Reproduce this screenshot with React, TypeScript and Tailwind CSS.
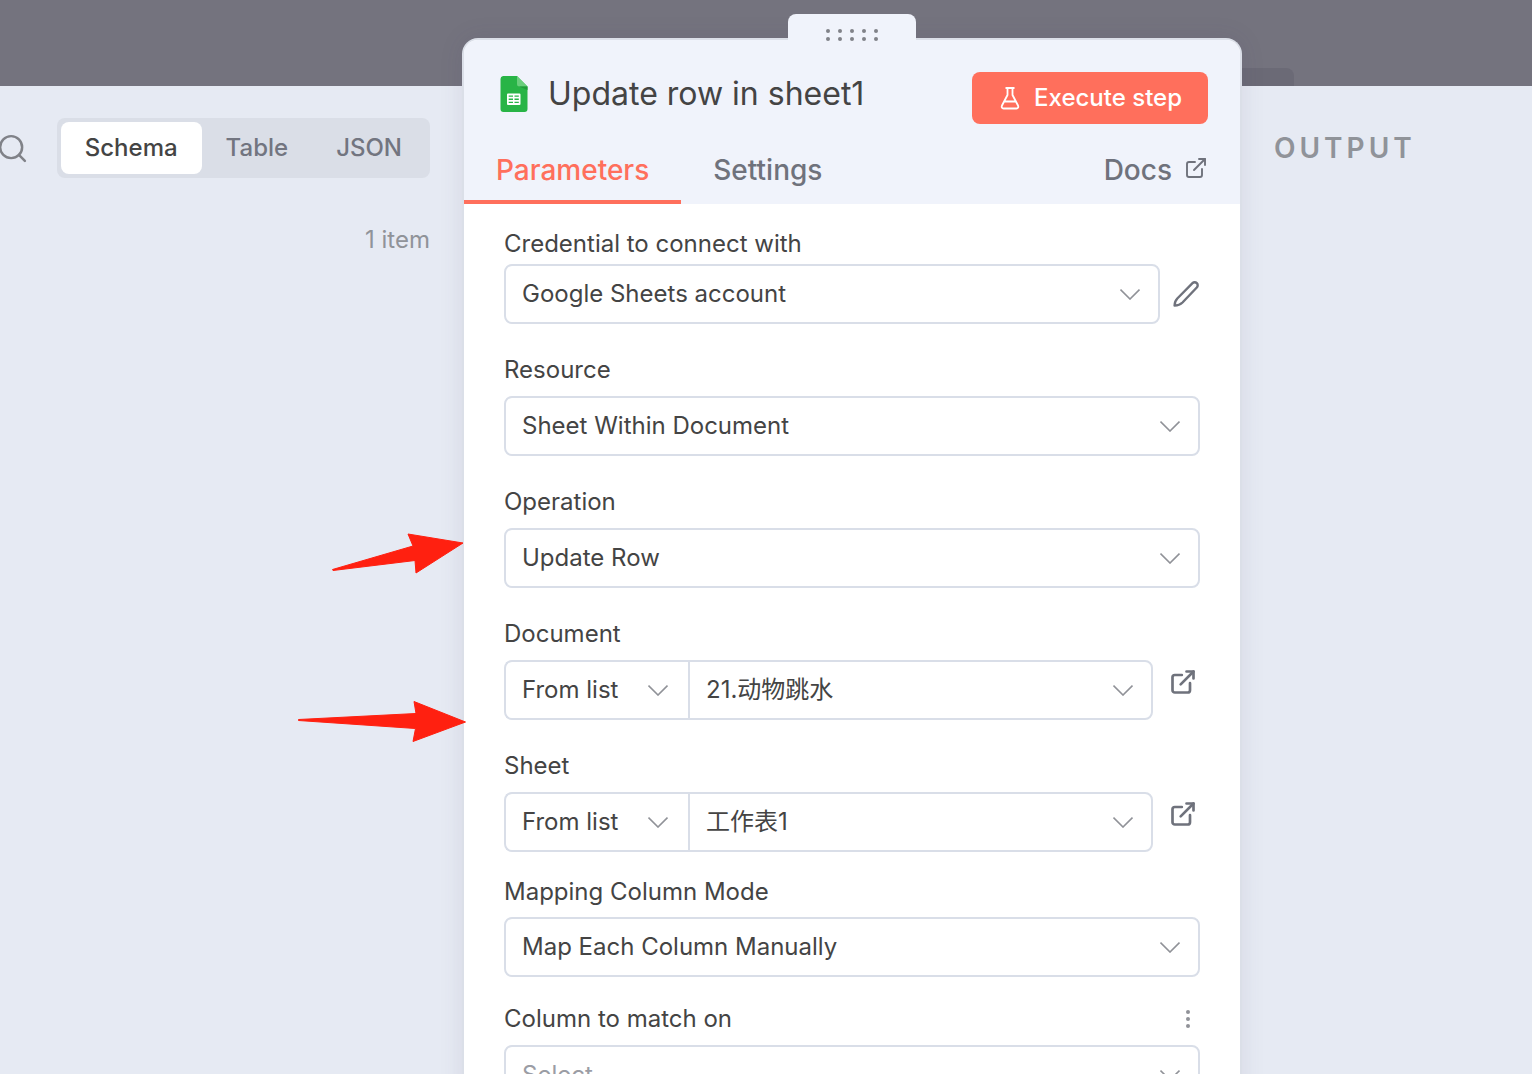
import React from "react";
import { ExternalLink, Search } from "lucide-react";

type SelectFieldProps = {
  id: string;
  value: string;
  ariaLabel?: string;
  placeholder?: boolean;
  className?: string;
};

const selectBase =
  "h-[60px] w-full appearance-none border-2 border-[#d9dee8] bg-white pl-4 pr-14 text-2xl outline-none focus:border-[#ff6f5c]";

const SelectField: React.FC<SelectFieldProps> = ({ id, value, ariaLabel, placeholder, className = "rounded-lg" }) => (
  <div className="relative w-full">
    <select
      id={id}
      aria-label={ariaLabel}
      defaultValue={value}
      className={`${selectBase} ${placeholder ? "text-[#9b9da5]" : "text-[#444]"} ${className}`}
    >
      <option value={value}>{value}</option>
    </select>
    <svg
      className="pointer-events-none absolute right-5 top-6 h-3 w-5 text-[#909298]"
      viewBox="0 0 20 12"
      fill="none"
      stroke="currentColor"
      strokeWidth="1.6"
    >
      <path d="M.5 1.500l9.500 9.500 9.500-9.500" />
    </svg>
  </div>
);

type FieldProps = {
  id: string;
  label: string;
  className?: string;
  labelClassName?: string;
  action?: React.ReactNode;
  children: React.ReactNode;
};

const Field: React.FC<FieldProps> = ({ id, label, className = "mt-[30px]", labelClassName = "mb-2.5", action, children }) => (
  <div className={className}>
    <div className={`flex items-center justify-between ${labelClassName}`}>
      <label htmlFor={id} className="text-2xl leading-8">
        {label}
      </label>
      {action}
    </div>
    {children}
  </div>
);

const LocatorField: React.FC<{ id: string; label: string; value: string }> = ({ id, label, value }) => (
  <Field id={id} label={label}>
    <div className="flex">
      <div className="w-[184px] shrink-0">
        <SelectField id={`${id}-mode`} ariaLabel={`${label} mode`} value="From list" className="rounded-l-lg border-r-0" />
      </div>
      <div className="grow">
        <SelectField id={id} value={value} className="rounded-r-lg" />
      </div>
      <a href="#" aria-label={`Open ${label}`} className="ml-4 mr-[3px] mt-2 h-7 w-7 shrink-0 text-[#6f727c]">
        <ExternalLink size={28} strokeWidth={2.3} />
      </a>
    </div>
  </Field>
);

const SheetsIcon = () => (
  <svg className="h-9 w-7 shrink-0" viewBox="0 0 28 36">
    <path d="M3 0h14l10.500 10.500V33a3 3 0 0 1-3 3H3.500a3 3 0 0 1-3-3V3a3 3 0 0 1 2.500-3z" fill="#28b446" />
    <path d="M17 0l10.500 10.500H19.500A2.500 2.500 0 0 1 17 8z" fill="#6ace7c" />
    <path d="M19 10.500h8.500V14z" fill="#219b38" />
    <path
      fillRule="evenodd"
      fill="#fff"
      d="M8 17.500h11.500a1 1 0 0 1 1 1V28a1 1 0 0 1-1 1H8a1 1 0 0 1-1-1v-9.500a1 1 0 0 1 1-1zM8.700 19.500v1.300h4.300v-1.300zM14.500 19.500v1.300h4.300v-1.300zM8.700 22.600v1.300h4.300v-1.300zM14.500 22.600v1.300h4.300v-1.300zM8.700 25.700v1.300h4.300v-1.300zM14.500 25.700v1.300h4.300v-1.300z"
    />
  </svg>
);

const FlaskIcon = () => (
  <svg className="h-6 w-5" viewBox="0 0 20 24" fill="none" stroke="currentColor" strokeWidth="1.8" strokeLinejoin="round">
    <path d="M5.500 2h9M7.500 2v7L2 19.500C1.300 21.300 2 22.500 3.500 22.500h13c1.500 0 2.200-1.200 1.500-3L12.500 9V2M4.500 15.500h11" />
  </svg>
);

const PencilIcon = () => (
  <svg className="h-7 w-7" viewBox="0 0 28 28" fill="none" stroke="currentColor" strokeWidth="2.4" strokeLinejoin="round">
    <path d="M20.500 3.200a2.900 2.900 0 0 1 4.300 4.300L10.500 22.500Q7.500 25.400 2.600 25.600Q2.600 21.400 5.300 18.500z" />
  </svg>
);

const views = ["Schema", "Table", "JSON"];

const InputPanel = () => (
  <aside className="mt-[86px] bg-[#e6eaf3] pr-8 pt-8">
    <div className="flex items-center justify-between">
      <button type="button" aria-label="Search" className="-ml-1 text-[#808288]">
        <Search size={33} strokeWidth={1.8} />
      </button>
      <div className="flex rounded-lg bg-[#dadee7] p-1" role="tablist">
        {views.map((view, i) => (
          <button
            key={view}
            type="button"
            role="tab"
            aria-selected={i === 0}
            className={`h-[52px] rounded-lg px-6 text-2xl font-medium ${i === 0 ? "bg-white text-[#444]" : "text-[#727580]"}`}
          >
            {view}
          </button>
        ))}
      </div>
    </div>
    <p className="mt-[46px] text-right text-2xl leading-8 text-[#909399]">1 item</p>
  </aside>
);

const OutputPanel = () => (
  <aside className="flex flex-col">
    <div className="flex h-[86px] items-end">
      <div className="h-[18px] w-[52px] rounded-tr-lg bg-[#6b6a76]" />
    </div>
    <div className="grow bg-[#e6eaf3] pl-8 pt-11">
      <h2 className="text-[28px] font-semibold leading-9 tracking-[4px] text-[#909399]">OUTPUT</h2>
    </div>
  </aside>
);

const Annotations = () => (
  <svg className="pointer-events-none absolute -left-[172px] top-[520px] h-[230px] w-[180px]" viewBox="290 520 180 230" fill="#ff2010">
    <path
      d="M332.500 569.500l80.500-23.500-5-12 55 9-47 30-1-12.500-82 10zM298.500 719.500l117.500-6-2-12 51.500 20.500-52.500 19.500 2.500-13-117-8z"
      stroke="#ff2010"
      strokeLinejoin="round"
    />
  </svg>
);

const NodePanel = () => (
  <main className="relative z-10 flex flex-col pt-[38px]">
    <button
      type="button"
      aria-label="Drag panel"
      className="absolute left-1/2 top-3.5 z-10 flex h-7 w-32 -translate-x-1/2 items-start justify-center rounded-t-lg bg-[#f0f3fb] pt-[15px]"
    >
      <span className="grid grid-cols-5 gap-x-2 gap-y-1">
        {Array.from({ length: 10 }, (_, i) => (
          <span key={i} className="h-1 w-1 rounded-full bg-[#808288]" />
        ))}
      </span>
    </button>

    <section className="grow rounded-t-2xl border-2 border-b-0 border-[#dbdfe8] bg-white shadow-[0_0_24px_rgba(68,60,100,0.1)]">
      <header className="rounded-t-[14px] bg-[#f0f3fb]">
        <div className="flex items-start justify-between pl-9 pr-8 pt-8">
          <div className="flex items-center gap-5 pt-0.5">
            <SheetsIcon />
            <h1 className="text-[32px] leading-10 text-[#444]">Update row in sheet1</h1>
          </div>
          <button
            type="button"
            className="flex h-[52px] items-center gap-3.5 rounded-lg bg-[#ff6f5c] pl-7 pr-[26px] text-2xl font-medium text-white"
          >
            <FlaskIcon />
            Execute step
          </button>
        </div>
        <nav className="mt-3 flex h-[68px] text-[28px] font-medium leading-9 text-[#6f727c]">
          <a href="#parameters" className="border-b-4 border-[#ff6f5c] px-8 pt-4 text-[#ff6f5c]">
            Parameters
          </a>
          <a href="#settings" className="px-8 pt-4">
            Settings
          </a>
          <a href="#docs" className="ml-auto flex gap-3 pr-8 pt-4">
            Docs
            <ExternalLink size={24} strokeWidth={1.9} className="mt-1" />
          </a>
        </nav>
      </header>

      <form className="px-10 pt-6 text-[#444]">
        <Field id="credential" label="Credential to connect with" className="" labelClassName="mb-1">
          <div className="flex items-center gap-3">
            <SelectField id="credential" value="Google Sheets account" />
            <button type="button" aria-label="Edit credential" className="shrink-0 text-[#6f727c]">
              <PencilIcon />
            </button>
          </div>
        </Field>
        <Field id="resource" label="Resource">
          <SelectField id="resource" value="Sheet Within Document" />
        </Field>
        <Field id="operation" label="Operation">
          <SelectField id="operation" value="Update Row" />
        </Field>
        <LocatorField id="document" label="Document" value="21.动物跳水" />
        <LocatorField id="sheet" label="Sheet" value="工作表1" />
        <Field id="mapping" label="Mapping Column Mode" className="mt-6" labelClassName="mb-[9px]">
          <SelectField id="mapping" value="Map Each Column Manually" />
        </Field>
        <Field
          id="match"
          label="Column to match on"
          className="mt-[26px]"
          action={
            <button type="button" aria-label="Options" className="flex w-6 flex-col items-center gap-[3px]">
              <span className="h-1 w-1 rounded-full bg-[#909298]" />
              <span className="h-1 w-1 rounded-full bg-[#909298]" />
              <span className="h-1 w-1 rounded-full bg-[#909298]" />
            </button>
          }
        >
          <SelectField id="match" value="Select" placeholder />
        </Field>
      </form>
    </section>
    <Annotations />
  </main>
);

export default function App() {
  return (
    <div className="grid h-screen grid-cols-[462fr_780fr_290fr] overflow-hidden bg-[#74737e] font-['Inter','Noto_Sans_CJK_SC',sans-serif]">
      <InputPanel />
      <NodePanel />
      <OutputPanel />
    </div>
  );
}
